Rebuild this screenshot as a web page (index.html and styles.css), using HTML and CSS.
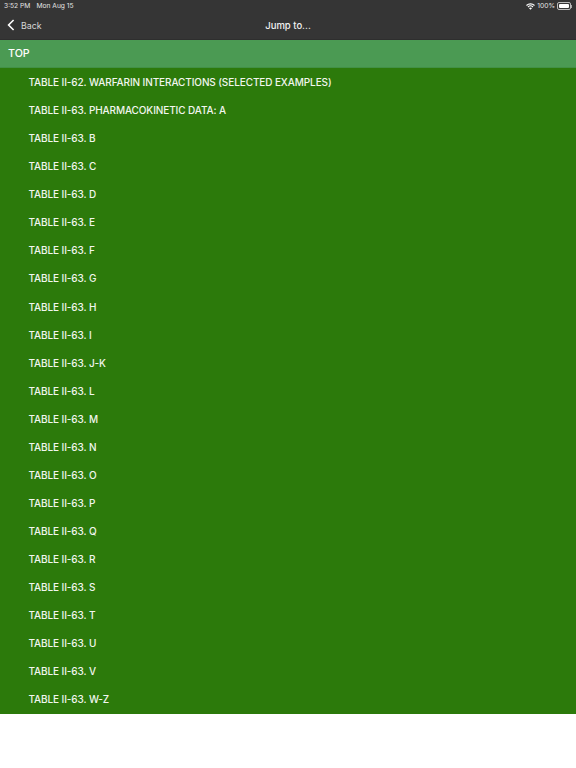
FILE: index.html
```html
<!DOCTYPE html>
<html lang="en">
<head>
    <meta charset="UTF-8">
    <meta name="viewport" content="width=device-width, initial-scale=1.0">
    <title>Jump to...</title>
    <link rel="stylesheet" href="styles.css">
</head>
<body>
    <div class="header">
        <div class="status-bar">
            <span class="status-left"><span>3:52 PM</span><span>Mon Aug 15</span></span>
            <span class="status-right">
                <svg class="wifi" width="9" height="7" viewBox="0 0 18 14">
                    <path d="M1 5a11.5 11.5 0 0 1 16 0" fill="none" stroke="#fff" stroke-width="2.2"/>
                    <path d="M4 8a7.2 7.2 0 0 1 10 0" fill="none" stroke="#fff" stroke-width="2.2"/>
                    <path d="M9 13.5l-3-3.2a4.2 4.2 0 0 1 6 0z" fill="#fff"/>
                </svg>
                <span>100%</span>
                <span class="battery"><span class="battery-fill"></span></span>
                <span class="battery-cap"></span>
            </span>
        </div>
        <div class="nav-bar">
            <span class="back">
                <svg width="8" height="12" viewBox="0 0 8 12">
                    <path d="M6.6 1L1.6 6l5 5" fill="none" stroke="#fff" stroke-width="1.6"/>
                </svg>
                Back
            </span>
            <span class="nav-title">Jump to...</span>
        </div>
    </div>
    <div class="top-row">TOP</div>
    <ul class="jump-list">
        <li>TABLE II-62. WARFARIN INTERACTIONS (SELECTED EXAMPLES)</li>
        <li>TABLE II-63. PHARMACOKINETIC DATA: A</li>
        <li>TABLE II-63. B</li>
        <li>TABLE II-63. C</li>
        <li>TABLE II-63. D</li>
        <li>TABLE II-63. E</li>
        <li>TABLE II-63. F</li>
        <li>TABLE II-63. G</li>
        <li>TABLE II-63. H</li>
        <li>TABLE II-63. I</li>
        <li>TABLE II-63. J-K</li>
        <li>TABLE II-63. L</li>
        <li>TABLE II-63. M</li>
        <li>TABLE II-63. N</li>
        <li>TABLE II-63. O</li>
        <li>TABLE II-63. P</li>
        <li>TABLE II-63. Q</li>
        <li>TABLE II-63. R</li>
        <li>TABLE II-63. S</li>
        <li>TABLE II-63. T</li>
        <li>TABLE II-63. U</li>
        <li>TABLE II-63. V</li>
        <li>TABLE II-63. W-Z</li>
    </ul>
</body>
</html>
```

FILE: styles.css
```css
html, body {
    margin: 0;
    padding: 0;
    height: 768px;
    overflow: hidden;
    background-color: white;
    font-family: Inter, "Liberation Sans", sans-serif;
}

.header {
    height: 40px;
    background-color: #353535;
    color: white;
    box-sizing: border-box;
    border-bottom: 1px solid #2e2e2e;
}

.status-bar {
    height: 12px;
    padding: 0 4px;
    display: flex;
    justify-content: space-between;
    align-items: center;
    font-size: 6.7px;
    color: #e4e4e4;
}

.status-left {
    display: flex;
    gap: 6px;
}

.status-right {
    display: flex;
    align-items: center;
    gap: 2px;
}

.battery {
    width: 10px;
    height: 4px;
    padding: 1px;
    border: 0.5px solid #bbb;
    border-radius: 2px;
    display: flex;
}

.battery-fill {
    flex: 1;
    background-color: white;
    border-radius: 1px;
}

.battery-cap {
    width: 1px;
    height: 3px;
    margin-left: -2px;
    background-color: #aaa;
}

.nav-bar {
    height: 27px;
    display: flex;
    align-items: center;
    justify-content: center;
    position: relative;
    font-size: 9.5px;
}

.back {
    position: absolute;
    left: 7px;
    top: 7px;
    display: flex;
    align-items: center;
    gap: 6px;
    font-size: 8.8px;
    color: #d6d6d6;
}

.nav-title {
    font-weight: 500;
    color: #f0f0f0;
}

.top-row {
    height: 28px;
    padding-left: 8px;
    display: flex;
    align-items: center;
    box-sizing: border-box;
    background-color: #4b9a53;
    border-bottom: 1px solid #429046;
    color: white;
    font-size: 10.7px;
    font-weight: 500;
}

.jump-list {
    list-style: none;
    margin: 0;
    padding: 0;
    height: 645.5px;
    display: grid;
    grid-auto-rows: 1fr;
    background-color: #2c7a0b;
}

.jump-list li {
    padding-left: 28.5px;
    display: flex;
    align-items: center;
    color: #f2f6ef;
    font-size: 10px;
    font-weight: 500;
    letter-spacing: -0.1px;
}
```
